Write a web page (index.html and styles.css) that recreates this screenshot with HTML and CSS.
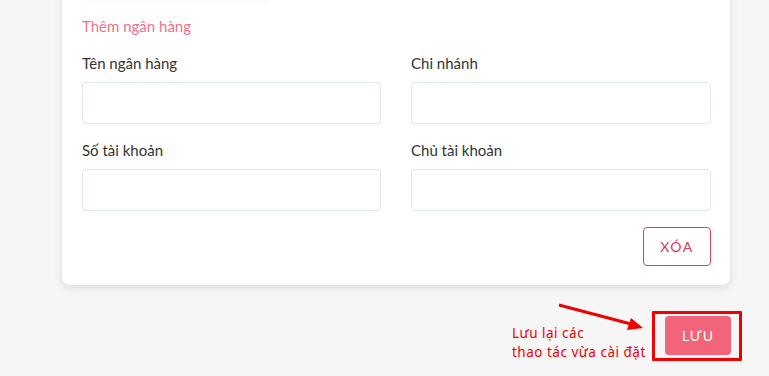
FILE: index.html
```html
<!DOCTYPE html>
<html lang="vi">
<head>
<meta charset="utf-8">
<link rel="stylesheet" href="styles.css">
</head>
<body>
<div class="page">
  <div class="card">
    <div class="tab-shadow"></div>
    <div class="title">Thêm ngân hàng</div>
    <div class="form">
      <div class="field">
        <label class="label">Tên ngân hàng</label>
        <input class="input" type="text">
      </div>
      <div class="field">
        <label class="label">Chi nhánh</label>
        <input class="input" type="text">
      </div>
      <div class="field">
        <label class="label">Số tài khoản</label>
        <input class="input" type="text">
      </div>
      <div class="field">
        <label class="label">Chủ tài khoản</label>
        <input class="input" type="text">
      </div>
    </div>
    <div class="actions">
      <button class="btn-delete">XÓA</button>
    </div>
  </div>
  <div class="footer">
    <button class="btn-save">LƯU</button>
    <div class="note">Lưu lại các<br>thao tác vừa cài đặt</div>
    <div class="highlight"></div>
    <svg class="arrow" width="100" height="40" viewBox="0 0 100 40">
      <line x1="2" y1="2" x2="74" y2="21" stroke="#f00000" stroke-width="3"/>
      <polygon points="86,25 70,27 74,15" fill="#f00000"/>
    </svg>
  </div>
</div>
</body>
</html>
```
FILE: styles.css
```css
* { box-sizing: border-box; }
body {
  margin: 0;
  background: #f6f6f6;
  font-family: "Lato", "Noto Sans", sans-serif;
  color: #333;
}
.page {
  width: 769px;
  height: 376px;
  overflow: hidden;
}
.card {
  position: relative;
  margin: -30px 0 0 62px;
  width: 668px;
  background: #fff;
  border-radius: 8px;
  box-shadow: 0 3px 10px rgba(0,0,0,0.10);
  padding: 46px 19px 19px 20px;
}
.tab-shadow {
  position: absolute;
  left: 18px;
  top: 0;
  width: 190px;
  height: 28px;
  border-radius: 8px;
  box-shadow: 0 2px 8px rgba(0,0,0,0.05);
  background: #fff;
}
.title {
  font-size: 15px;
  line-height: 20px;
  color: #f07189;
}
.form {
  margin-top: 17px;
  display: grid;
  grid-template-columns: 299px 300px;
  column-gap: 30px;
  row-gap: 16px;
}
.field { display: flex; flex-direction: column; }
.label {
  font-size: 15px;
  line-height: 20px;
  margin-bottom: 9px;
  color: #333;
}
.input {
  height: 42px;
  border: 1px solid #dfe5ee;
  border-radius: 4px;
  background: #fff;
  font: inherit;
}
.actions {
  display: flex;
  justify-content: flex-end;
  margin-top: 16px;
}
.btn-delete {
  width: 68px;
  height: 39px;
  border: 1px solid #d9465a;
  border-radius: 4px;
  background: #fff;
  color: #d23a4e;
  font-family: inherit;
  font-size: 14px;
  letter-spacing: 1.5px;
}
.footer {
  position: relative;
  width: 730px;
  display: flex;
  justify-content: flex-end;
  margin-top: 31px;
}
.btn-save {
  width: 66px;
  height: 39px;
  border: none;
  border-radius: 4px;
  background: #f16479;
  color: #fff;
  font-family: inherit;
  font-size: 14px;
  letter-spacing: 1px;
  margin-right: -1px;
}
.note {
  position: absolute;
  left: 512px;
  top: 8px;
  font-family: "Noto Sans", sans-serif;
  font-size: 13.5px;
  line-height: 19px;
  letter-spacing: 0.5px;
  color: #f00000;
}
.highlight {
  position: absolute;
  left: 652px;
  top: -5px;
  width: 90px;
  height: 50px;
  border: 3px solid #f00000;
  border-radius: 1px;
}
.arrow {
  position: absolute;
  left: 557px;
  top: -13px;
}
```
